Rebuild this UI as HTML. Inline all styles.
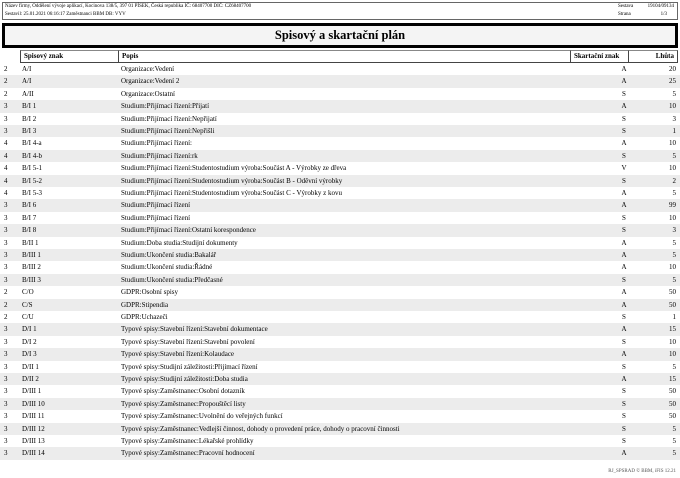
<!DOCTYPE html>
<html><head><meta charset="utf-8"><style>
*{margin:0;padding:0;box-sizing:border-box}
body{width:680px;height:478px;background:#fff;font-family:"Liberation Serif",serif;color:#000;position:relative;overflow:hidden}
.hdr{position:absolute;left:2px;top:2px;width:676px;height:18px;border:1px solid #666;font-size:5px;line-height:6px}
.hdr div{position:absolute;white-space:nowrap}
.title{position:absolute;left:2px;top:23px;width:676px;height:25px;border:3px solid #000;background:#f4f4f4;font-weight:bold;font-size:12.5px;text-align:center;line-height:19px}
.th{position:absolute;top:50px;height:13px;border-left:1px solid #444;border-top:1px solid #888;border-bottom:1px solid #444;font-weight:bold;font-size:7px;line-height:11px;padding:0 3px}
.r{position:absolute;left:0;width:680px;height:12.4px;font-size:7px;line-height:12px}
.r.g{background:#ececec}
.r span{position:absolute;white-space:nowrap}
.c1{left:4px}.c2{left:22px}.c3{left:121px}.c4{left:620px;width:8px;text-align:center}.c5{right:4px}
.foot{position:absolute;right:4px;top:469px;font-size:5px;color:#555}
</style></head><body>
<div class="hdr">
<div style="left:2px;top:1px">Název firmy, Oddělení vývoje aplikací, Kocinova 138/5, 397 01 PÍSEK, Česká republika IČ: 68407700 DIČ: CZ68407700</div>
<div style="left:2px;top:9px">Sestavil: 25.01.2021 06:16:17 Zaměstnanci BBM DB: VYV</div>
<div style="left:615px;top:1px">Sestava</div><div style="right:3px;top:1px">19104/09134</div>
<div style="left:615px;top:9px">Strana</div><div style="right:10px;top:9px">1/3</div>
</div>
<div class="title">Spisový a skartační plán</div>
<div class="th" style="left:20px;width:98px">Spisový znak</div>
<div class="th" style="left:118px;width:452px">Popis</div>
<div class="th" style="left:570px;width:58px">Skartační znak</div>
<div class="th" style="left:628px;width:50px;text-align:right;border-right:1px solid #444">Lhůta</div>
<div id="rows"></div>
<div class="foot">RJ_SPSRAD © BBM, iFIS 12.21</div>
<script>
var d=[["2","A/I","Organizace:Vedení","A","20"],["2","A/I","Organizace:Vedení 2","A","25"],["2","A/II","Organizace:Ostatní","S","5"],["3","B/I 1","Studium:Přijímací řízení:Přijatí","A","10"],["3","B/I 2","Studium:Přijímací řízení:Nepřijatí","S","3"],["3","B/I 3","Studium:Přijímací řízení:Nepřišli","S","1"],["4","B/I 4-a","Studium:Přijímací řízení:","A","10"],["4","B/I 4-b","Studium:Přijímací řízení:rk","S","5"],["4","B/I 5-1","Studium:Přijímací řízení:Studentostudium výroba:Součást A - Výrobky ze dřeva","V","10"],["4","B/I 5-2","Studium:Přijímací řízení:Studentostudium výroba:Součást B - Oděvní výrobky","S","2"],["4","B/I 5-3","Studium:Přijímací řízení:Studentostudium výroba:Součást C - Výrobky z kovu","A","5"],["3","B/I 6","Studium:Přijímací řízení","A","99"],["3","B/I 7","Studium:Přijímací řízení","S","10"],["3","B/I 8","Studium:Přijímací řízení:Ostatní korespondence","S","3"],["3","B/II 1","Studium:Doba studia:Studijní dokumenty","A","5"],["3","B/III 1","Studium:Ukončení studia:Bakalář","A","5"],["3","B/III 2","Studium:Ukončení studia:Řádné","A","10"],["3","B/III 3","Studium:Ukončení studia:Předčasné","S","5"],["2","C/O","GDPR:Osobní spisy","A","50"],["2","C/S","GDPR:Stipendia","A","50"],["2","C/U","GDPR:Uchazeči","S","1"],["3","D/I 1","Typové spisy:Stavební řízení:Stavební dokumentace","A","15"],["3","D/I 2","Typové spisy:Stavební řízení:Stavební povolení","S","10"],["3","D/I 3","Typové spisy:Stavební řízení:Kolaudace","A","10"],["3","D/II 1","Typové spisy:Studijní záležitosti:Přijímací řízení","S","5"],["3","D/II 2","Typové spisy:Studijní záležitosti:Doba studia","A","15"],["3","D/III 1","Typové spisy:Zaměstnanec:Osobní dotazník","S","50"],["3","D/III 10","Typové spisy:Zaměstnanec:Propouštěcí listy","S","50"],["3","D/III 11","Typové spisy:Zaměstnanec:Uvolnění do veřejných funkcí","S","50"],["3","D/III 12","Typové spisy:Zaměstnanec:Vedlejší činnost, dohody o provedení práce, dohody o pracovní činnosti","S","5"],["3","D/III 13","Typové spisy:Zaměstnanec:Lékařské prohlídky","S","5"],["3","D/III 14","Typové spisy:Zaměstnanec:Pracovní hodnocení","A","5"]];
var h="";d.forEach(function(r,i){h+='<div class="r'+(i%2?' g':'')+'" style="top:'+(63+i*12.4)+'px"><span class="c1">'+r[0]+'</span><span class="c2">'+r[1]+'</span><span class="c3">'+r[2]+'</span><span class="c4">'+r[3]+'</span><span class="c5">'+r[4]+'</span></div>'});
document.getElementById("rows").innerHTML=h;
</script>
</body></html>
